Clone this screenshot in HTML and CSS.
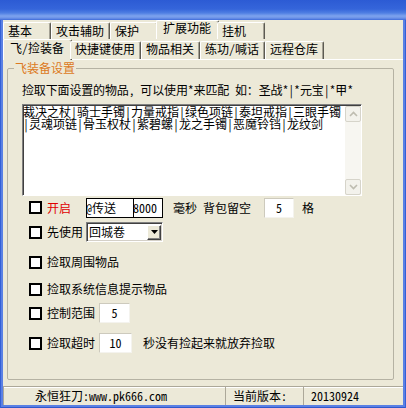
FILE: index.html
```html
<!DOCTYPE html>
<html lang="zh-CN">
<head>
<meta charset="utf-8">
<title>飞/捡装备</title>
<link rel="stylesheet" href="styles.css">
</head>
<body>
<div class="window">
  <div class="titlebar"></div>
  <div class="frame">
    <div class="client">
      <div class="tabs tabs-outer">
        <div class="tab">基本</div>
        <div class="tab">攻击辅助</div>
        <div class="tab">保护</div>
        <div class="tab active">扩展功能</div>
        <div class="tab">挂机</div>
      </div>
      <div class="tabs tabs-inner">
        <div class="tab active">飞/捡装备</div>
        <div class="tab">快捷键使用</div>
        <div class="tab">物品相关</div>
        <div class="tab">练功/喊话</div>
        <div class="tab">远程仓库</div>
      </div>
      <div class="page">
        <fieldset class="group">
          <legend>飞装备设置</legend>
          <p class="desc">捡取下面设置的物品, 可以使用*来匹配 如：圣战*|*元宝|*甲*</p>
          <div class="listbox">
            <div class="list-text"><div class="list-line">裁决之杖|骑士手镯|力量戒指|绿色项链|泰坦戒指|三眼手镯</div><div class="list-line">|灵魂项链|骨玉权杖|紫碧螺|龙之手镯|恶魔铃铛|龙纹剑</div></div>
            <div class="scrollbar">
              <div class="sb-btn"><svg width="9" height="6" viewBox="0 0 9 6"><path d="M1 5 L4.5 1.5 L8 5" fill="none" stroke="#bebcb0" stroke-width="1.6"/></svg></div>
              <div class="sb-track"></div>
              <div class="sb-btn"><svg width="9" height="6" viewBox="0 0 9 6"><path d="M1 1 L4.5 4.5 L8 1" fill="none" stroke="#bebcb0" stroke-width="1.6"/></svg></div>
            </div>
          </div>
          <div class="row row-1">
            <span class="cb"></span>
            <span class="lbl lbl-fixed red">开启</span>
            <span class="ed-black ed-a">@传送</span>
            <span class="ed-black ed-b">8000</span>
            <span class="lbl ms">毫秒 背包留空</span>
            <span class="ed ed-bag">5</span>
            <span class="lbl ge">格</span>
          </div>
          <div class="row row-2">
            <span class="cb"></span>
            <span class="lbl lbl-fixed">先使用</span>
            <span class="select">
              <span class="select-text">回城卷</span>
              <span class="select-btn"><svg width="7" height="4" viewBox="0 0 7 4"><polygon points="0,0 7,0 3.5,4" fill="#000"/></svg></span>
            </span>
          </div>
          <div class="row row-3">
            <span class="cb"></span>
            <span class="lbl">捡取周围物品</span>
          </div>
          <div class="row row-4">
            <span class="cb"></span>
            <span class="lbl">捡取系统信息提示物品</span>
          </div>
          <div class="row row-5">
            <span class="cb"></span>
            <span class="lbl">控制范围</span>
            <span class="ed ed-range">5</span>
          </div>
          <div class="row row-6">
            <span class="cb"></span>
            <span class="lbl">捡取超时</span>
            <span class="ed ed-time">10</span>
            <span class="lbl after">秒没有捡起来就放弃捡取</span>
          </div>
        </fieldset>
      </div>
      <div class="statusbar">
        <div class="panel p1">永恒狂刀:www.pk666.com</div>
        <div class="panel p2">当前版本:</div>
        <div class="panel p3">20130924</div>
      </div>
    </div>
  </div>
</div>
</body>
</html>
```
FILE: styles.css
```css
* { box-sizing: border-box; }
html, body { margin: 0; padding: 0; }
body {
  width: 406px;
  height: 408px;
  overflow: hidden;
  font-family: "Noto Sans Mono CJK SC", "Noto Sans CJK SC", sans-serif;
  font-size: 12px;
  line-height: 14px;
  color: #000;
  background: #3a64d7;
  text-autospace: no-autospace;
}
.window {
  display: flex;
  flex-direction: column;
  width: 406px;
  height: 408px;
}
.titlebar {
  flex: none;
  height: 20px;
  background: linear-gradient(to bottom, #2c5bd4 0px, #3565da 9px, #4f7fe3 13px, #7ea3ee 16px, #6d93e9 18px, #3f6bd9 20px);
}
.frame {
  flex: 1;
  display: flex;
  padding: 0 3px 3px 3px;
  background: #5a80e4;
  box-shadow: inset 1px 0 0 #3460d6, inset -1px 0 0 #3460d6, inset 0 -1px 0 #2f58cc;
}
.client {
  flex: 1;
  min-width: 0;
  display: flex;
  flex-direction: column;
  background: #ece9d8;
}

/* tabs */
.tabs {
  flex: none;
  display: flex;
  align-items: flex-end;
  position: relative;
  z-index: 1;
}
.tabs-outer { height: 19px; }
.tabs-inner { height: 20px; }
.tab {
  flex: none;
  white-space: nowrap;
  background: #ece9d8;
  border-top: 1px solid #fff;
  border-left: 1px solid #fff;
  border-right: 1px solid #5c5a52;
  box-shadow: inset -1px 0 0 #a4a194;
  border-radius: 2px 2px 0 0;
  padding-left: 4px;
  padding-right: 5px;
}
.tabs-outer .tab {
  min-width: 48px;
  height: 17px;
  padding-top: 1px;
}
.tabs-outer .tab.active {
  height: 19px;
  padding-top: 0;
  margin: 0 -2px;
  padding-left: 6px;
  padding-right: 7px;
}
.tabs-inner .tab {
  height: 18px;
  padding-top: 0;
}
.tabs-inner .tab.active {
  height: 21px;
  padding-top: 1px;
  margin: 0 -2px -1px -2px;
  padding-left: 6px;
  padding-right: 7px;
}
.tabs-inner .tab.active:first-child { margin-left: 0; }

/* page */
.page {
  flex: 1;
  display: flex;
  flex-direction: column;
  border-top: 1px solid #fff;
  padding: 0 9px 0 4px;
  min-height: 0;
}
.group {
  flex: 1;
  min-width: 0;
  margin: 1px 0 6px 0;
  padding: 8px 0 0 14px;
  border: 1px solid #b5b2a3;
  border-radius: 2px;
}
.group legend {
  margin-left: -8px;
  padding: 0 1px;
  line-height: 14px;
  color: #dc7a22;
}
.desc {
  margin: 0;
  white-space: nowrap;
  line-height: 14px;
  letter-spacing: -0.15px;
}

/* list box */
.listbox {
  margin-top: 7px;
  width: 340px;
  height: 92px;
  display: flex;
  background: #fff;
  border-top: 1px solid #808080;
  border-left: 1px solid #808080;
  border-right: 1px solid #fff;
  border-bottom: 1px solid #fff;
  box-shadow: inset 1px 1px 0 #404040;
}
.list-text {
  flex: 1;
  min-width: 0;
  padding: 1px 0 0 0;
}
.list-line {
  white-space: nowrap;
  line-height: 12px;
}
.scrollbar {
  flex: none;
  width: 16px;
  display: flex;
  flex-direction: column;
  background: #f7f6f1;
  margin: 1px 0 0 0;
}
.sb-btn {
  flex: none;
  height: 16px;
  display: flex;
  align-items: center;
  justify-content: center;
  background: #f3f2ec;
  border: 1px solid #d6d4ca;
  border-radius: 2px;
}
.sb-track { flex: 1; }

/* rows */
.row {
  display: flex;
  align-items: center;
  height: 20px;
  white-space: nowrap;
}
.row-1 { margin-top: 1px; height: 21px; }
.row-2 { margin-top: 4px; }
.row-3 { margin-top: 10px; }
.row-4 { margin-top: 7px; }
.row-5 { margin-top: 4px; }
.row-6 { margin-top: 10px; }

.cb {
  flex: none;
  width: 13px;
  height: 13px;
  margin-left: 7px;
  margin-right: 5px;
  border: 2px solid #000;
  background: #fff;
}
.lbl { flex: none; }
.lbl-fixed { width: 39px; }
.red { color: #e00000; }
.ms { margin-left: 10px; }
.ge { margin-left: 8px; }
.after { margin-left: 11px; }

.ed-black {
  flex: none;
  height: 20px;
  line-height: 18px;
  border: 1px solid #000;
  background: #fff;
  overflow: hidden;
  white-space: nowrap;
  text-indent: -1px;
}
.ed-a { width: 48px; }
.ed-b { width: 30px; margin-left: -1px; }

.ed {
  flex: none;
  height: 20px;
  line-height: 18px;
  text-align: center;
  background: #fff;
  border-top: 1px solid #cdcabd;
  border-left: 1px solid #cdcabd;
  border-right: 1px solid #f4f3ee;
  border-bottom: 1px solid #f4f3ee;
}
.ed-bag { width: 30px; margin-left: 13px; }
.ed-range { width: 31px; margin-left: 4px; }
.ed-time { width: 33px; margin-left: 4px; }

.select {
  flex: none;
  width: 77px;
  height: 20px;
  display: flex;
  align-items: center;
  padding: 0 1px 0 1px;
  background: #fff;
  border-top: 1px solid #808080;
  border-left: 1px solid #808080;
  border-right: 1px solid #fff;
  border-bottom: 1px solid #fff;
  box-shadow: inset 1px 1px 0 #404040, inset -1px -1px 0 #d4d0c8;
}
.select-text { flex: 1; padding-left: 1px; }
.select-btn {
  flex: none;
  width: 14px;
  height: 15px;
  display: flex;
  align-items: center;
  justify-content: center;
  background: #ece9d8;
  border-top: 1px solid #fff;
  border-left: 1px solid #fff;
  border-right: 1px solid #404040;
  border-bottom: 1px solid #404040;
  box-shadow: inset -1px -1px 0 #808080;
}

/* status bar */
.statusbar {
  flex: none;
  height: 19px;
  display: flex;
  border-top: 1px solid #aca899;
  box-shadow: inset 0 1px 0 #fff;
}
.panel {
  display: flex;
  align-items: center;
  white-space: nowrap;
  border-left: 1px solid #aca899;
}
.p1 { width: 222px; padding-left: 31px; }
.p2 { width: 78px; padding-left: 7px; }
.p3 { flex: 1; padding-left: 7px; }
```
